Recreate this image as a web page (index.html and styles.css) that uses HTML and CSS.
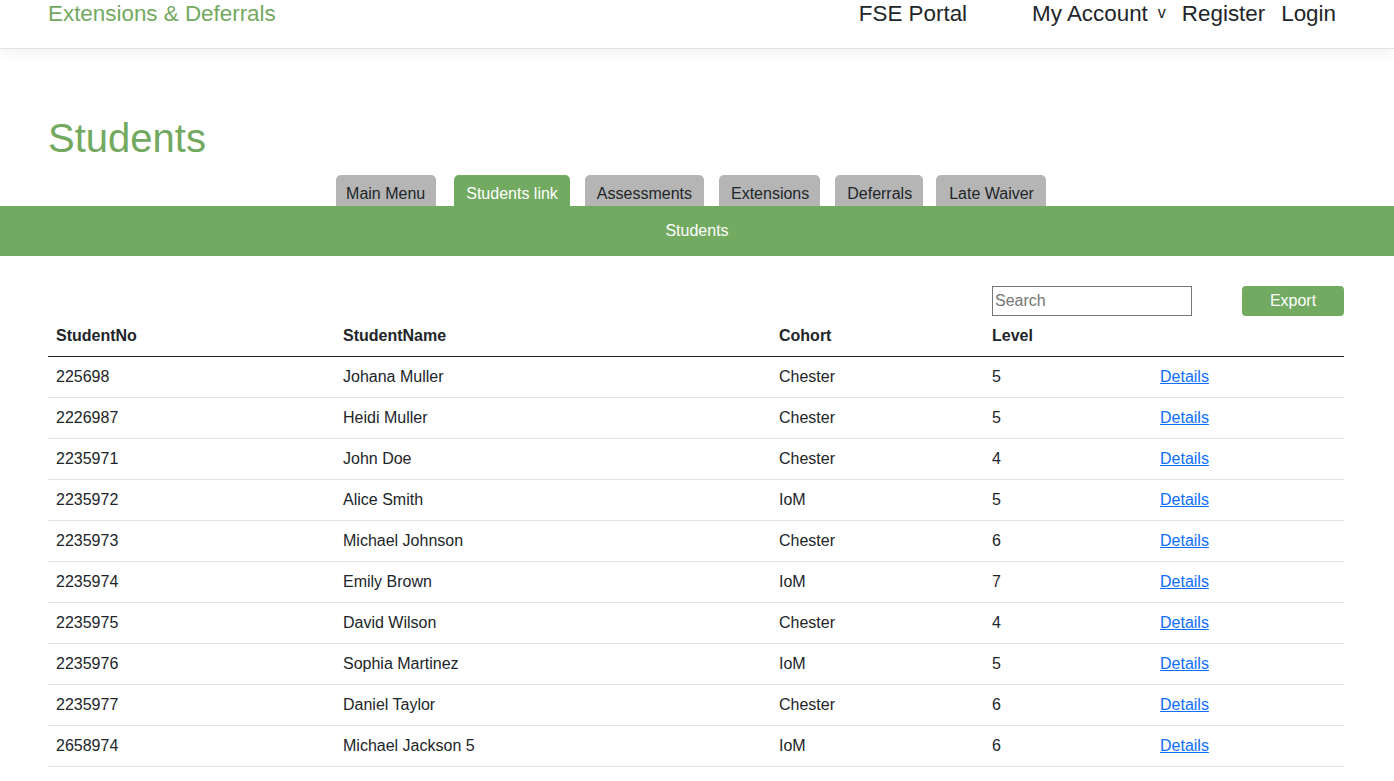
FILE: index.html
```html
<!DOCTYPE html>
<html lang="en">
<head>
<meta charset="utf-8">
<title>Students - Extensions &amp; Deferrals</title>
<link rel="stylesheet" href="styles.css">
</head>
<body>
<header class="navbar">
  <a class="brand" href="#">Extensions &amp; Deferrals</a>
  <nav class="nav-right">
    <a class="nav-link portal" href="#">FSE Portal</a>
    <a class="nav-link account" href="#">My Account<span class="caret">v</span></a>
    <a class="nav-link" href="#">Register</a>
    <a class="nav-link" href="#">Login</a>
  </nav>
</header>
<main>
  <h1 class="page-title">Students</h1>
  <div class="tabs">
    <a class="tab" href="#">Main Menu</a>
    <a class="tab active" href="#">Students link</a>
    <a class="tab" href="#">Assessments</a>
    <a class="tab" href="#">Extensions</a>
    <a class="tab" href="#">Deferrals</a>
    <a class="tab" href="#">Late Waiver</a>
  </div>
  <div class="subbar">Students</div>
  <section class="content">
    <div class="toolbar">
      <input class="search" type="text" placeholder="Search">
      <button class="export">Export</button>
    </div>
    <table class="table">
      <colgroup>
        <col class="c1"><col class="c2"><col class="c3"><col class="c4"><col class="c5">
      </colgroup>
      <thead>
        <tr><th>StudentNo</th><th>StudentName</th><th>Cohort</th><th>Level</th><th></th></tr>
      </thead>
      <tbody>
        <tr><td>225698</td><td>Johana Muller</td><td>Chester</td><td>5</td><td><a href="#">Details</a></td></tr>
        <tr><td>2226987</td><td>Heidi Muller</td><td>Chester</td><td>5</td><td><a href="#">Details</a></td></tr>
        <tr><td>2235971</td><td>John Doe</td><td>Chester</td><td>4</td><td><a href="#">Details</a></td></tr>
        <tr><td>2235972</td><td>Alice Smith</td><td>IoM</td><td>5</td><td><a href="#">Details</a></td></tr>
        <tr><td>2235973</td><td>Michael Johnson</td><td>Chester</td><td>6</td><td><a href="#">Details</a></td></tr>
        <tr><td>2235974</td><td>Emily Brown</td><td>IoM</td><td>7</td><td><a href="#">Details</a></td></tr>
        <tr><td>2235975</td><td>David Wilson</td><td>Chester</td><td>4</td><td><a href="#">Details</a></td></tr>
        <tr><td>2235976</td><td>Sophia Martinez</td><td>IoM</td><td>5</td><td><a href="#">Details</a></td></tr>
        <tr><td>2235977</td><td>Daniel Taylor</td><td>Chester</td><td>6</td><td><a href="#">Details</a></td></tr>
        <tr><td>2658974</td><td>Michael Jackson 5</td><td>IoM</td><td>6</td><td><a href="#">Details</a></td></tr>
      </tbody>
    </table>
  </section>
</main>
</body>
</html>
```

FILE: styles.css
```css
* { box-sizing: border-box; }

html, body {
  margin: 0;
  padding: 0;
  background: #fff;
  font-family: "Liberation Sans", Arial, sans-serif;
  font-size: 16px;
  color: #212529;
}

a { text-decoration: none; }

.navbar {
  height: 49px;
  display: flex;
  align-items: flex-start;
  justify-content: space-between;
  padding: 0 58px 0 48px;
  border-bottom: 1px solid #dfe2e6;
  box-shadow: 0 4px 12px rgba(0, 0, 0, 0.05);
  position: relative;
  z-index: 1;
}

.brand {
  font-size: 22.4px;
  line-height: 28px;
  color: #72a95f;
}

.nav-right {
  display: flex;
  align-items: flex-start;
}

.nav-link {
  font-size: 22.4px;
  line-height: 28px;
  color: #212529;
  margin-left: 16px;
}

.nav-link.portal { margin-right: 49px; }

.caret {
  font-size: 16px;
  margin-left: 10px;
  position: relative;
  top: -3px;
}

main { display: block; }

.page-title {
  margin: 65px 0 0 48px;
  font-size: 40px;
  line-height: 48px;
  font-weight: 400;
  color: #72a95f;
}

.tabs {
  display: flex;
  justify-content: center;
  gap: 15px;
  margin-top: 13px;
  padding-right: 12px;
}

.tab {
  display: block;
  height: 31px;
  padding: 9px 12px 0;
  line-height: 20px;
  font-size: 16px;
  color: #212529;
  background: #b5b5b5;
  border-radius: 5px 5px 0 0;
}

.tab:first-child { padding-left: 10px; padding-right: 11px; }

.tab:nth-child(4) { padding-right: 11px; }
.tab:nth-child(5) { padding-right: 11px; }
.tab:last-child { padding-left: 13px; margin-left: -2px; }

.tab.active {
  background: #72aa61;
  color: #fff;
  margin-left: 3px;
}

.subbar {
  height: 50px;
  line-height: 49px;
  background: #72aa61;
  color: #fff;
  text-align: center;
  font-size: 16px;
}

.content {
  margin: 0 50px 0 48px;
}

.toolbar {
  display: flex;
  justify-content: flex-end;
  align-items: center;
  gap: 50px;
  margin-top: 30px;
  height: 30px;
}

.search {
  width: 200px;
  height: 30px;
  border: 1px solid #767676;
  padding: 1px 2px;
  font-family: "Liberation Sans", Arial, sans-serif;
  font-size: 16px;
  color: #212529;
}

.search::placeholder { color: #757575; }

.export {
  width: 102px;
  height: 30px;
  border: none;
  border-radius: 4px;
  background: #72aa61;
  color: #fff;
  font-family: "Liberation Sans", Arial, sans-serif;
  font-size: 16px;
  padding: 0;
}

.table {
  width: 100%;
  border-collapse: collapse;
  table-layout: fixed;
}

.c1 { width: 287px; }
.c2 { width: 436px; }
.c3 { width: 213px; }
.c4 { width: 168px; }

.table th,
.table td {
  padding: 8px;
  line-height: 24px;
  text-align: left;
  vertical-align: top;
}

.table th {
  font-weight: 700;
  border-bottom: 1px solid #212529;
}

.table td {
  border-bottom: 1px solid #dee2e6;
}

.table td a {
  color: #0d6efd;
  text-decoration: underline;
}
```
